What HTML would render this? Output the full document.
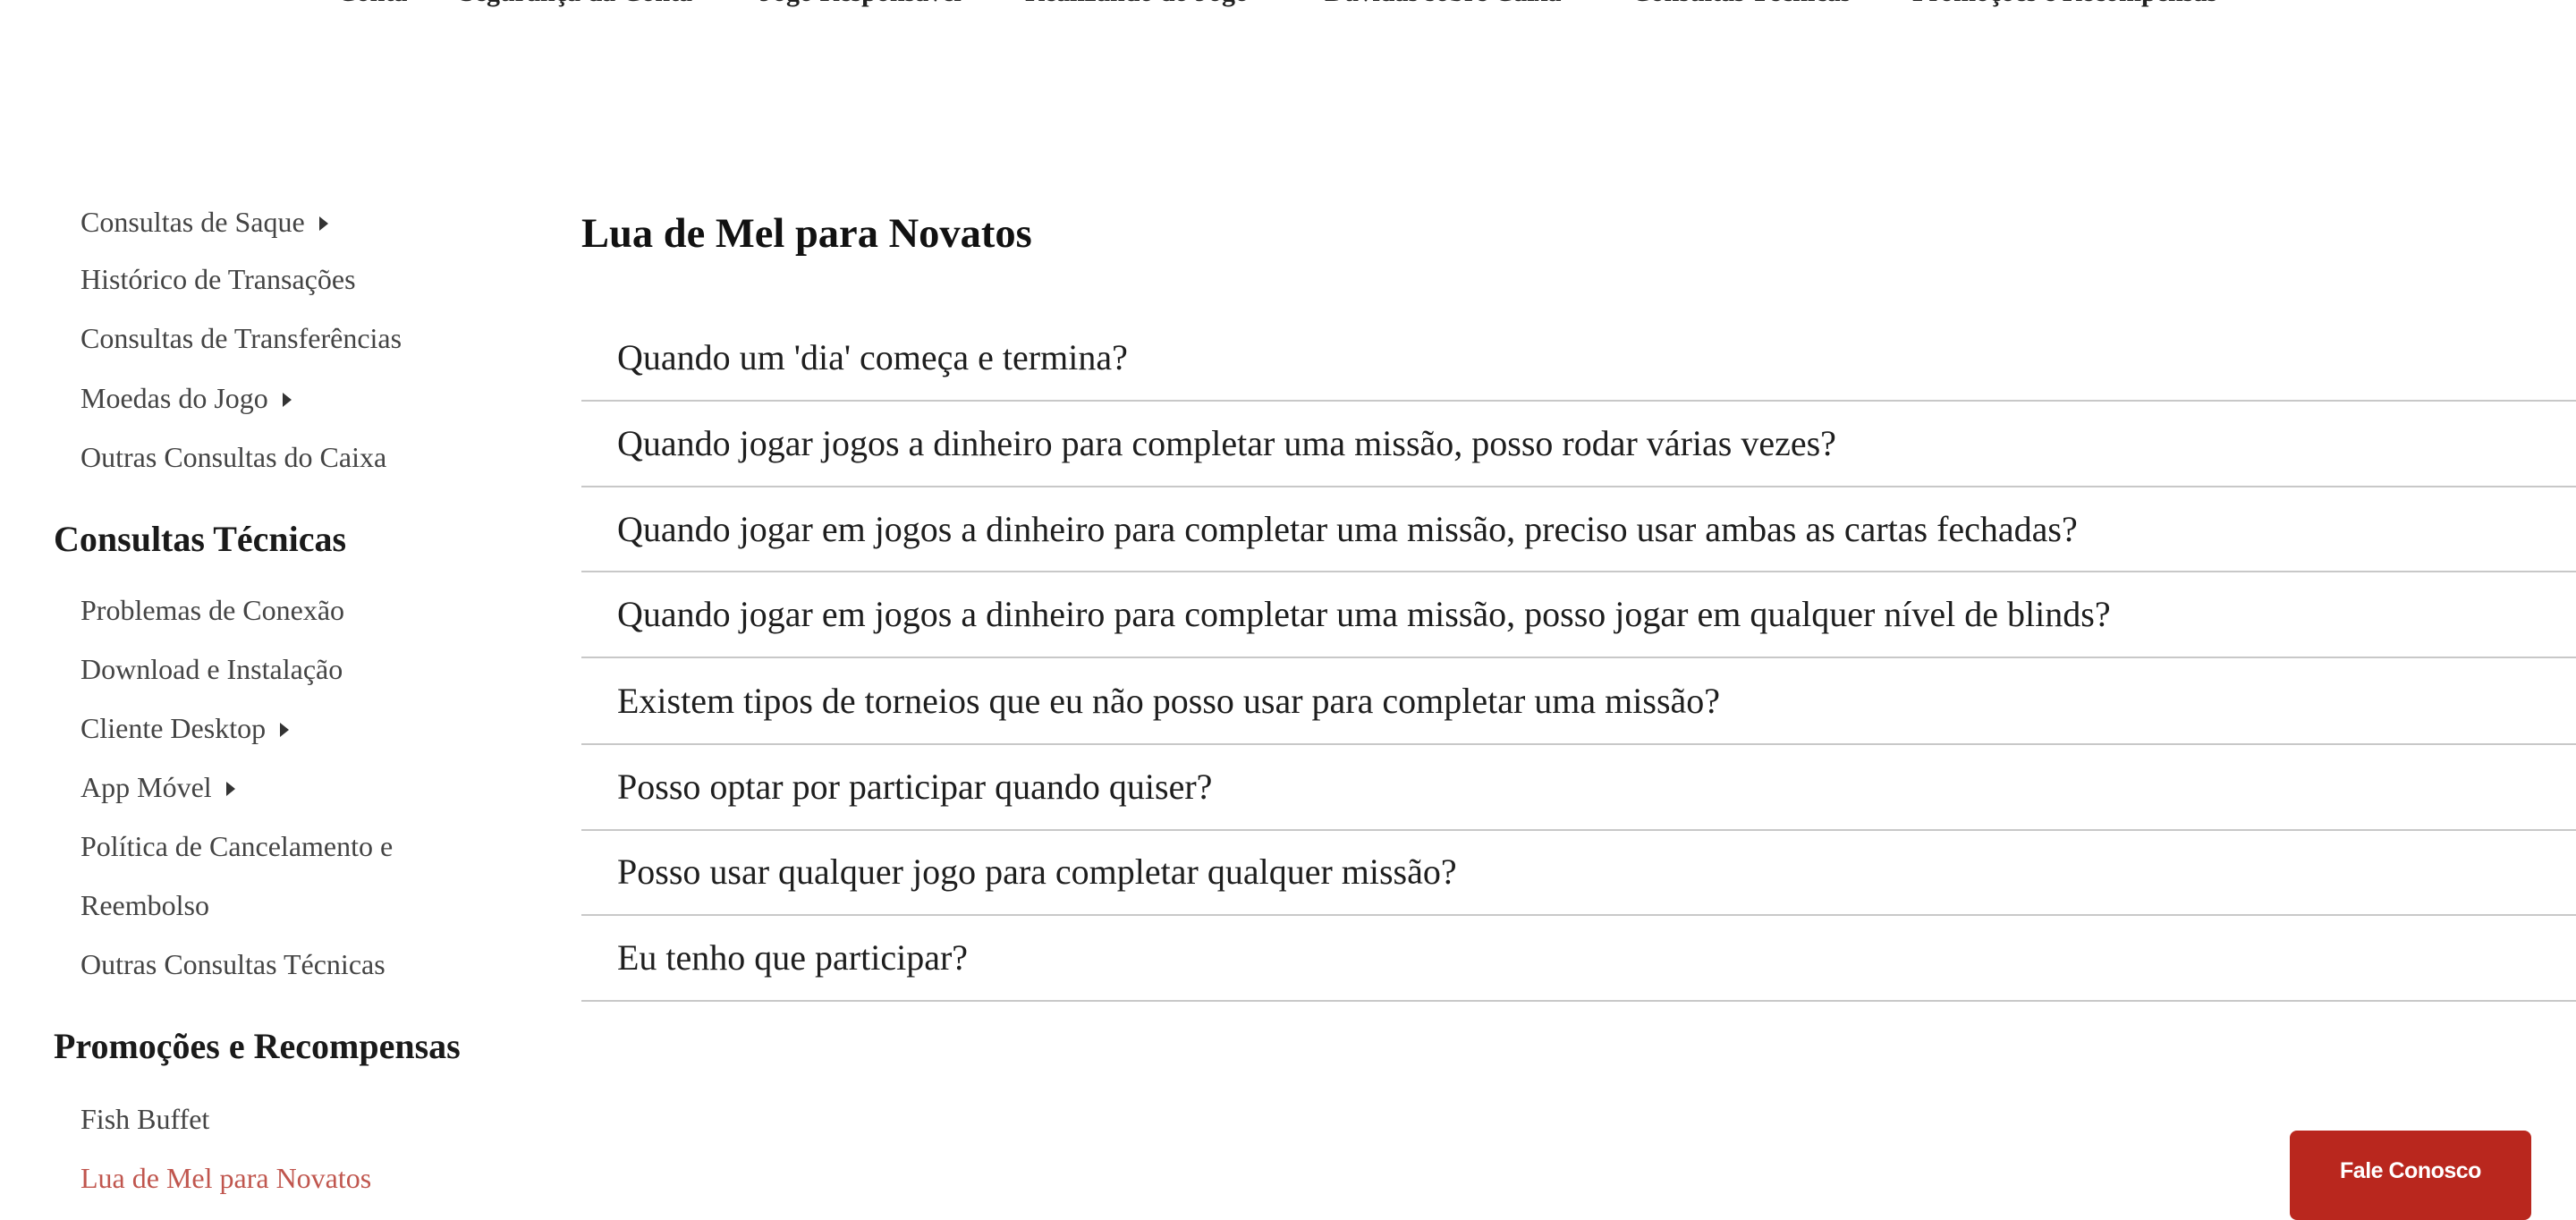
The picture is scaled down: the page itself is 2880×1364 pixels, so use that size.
<!DOCTYPE html>
<html><head><meta charset="utf-8"><style>
*{margin:0;padding:0;box-sizing:border-box}
html,body{width:2880px;height:1350px;overflow:hidden;background:#fff;font-family:"Liberation Serif",serif}
.a{position:absolute;white-space:nowrap}
.nav{font-weight:bold;font-size:30px;color:#222;line-height:30px;top:-23px}
.s{font-size:32px;color:#444;line-height:40px;left:90px}
.h{font-size:40px;font-weight:bold;color:#1a1a1a;line-height:50px;left:60px}
.q{font-size:40px;color:#1e1e1e;line-height:50px;left:690px}
.ln{position:absolute;left:650px;right:0;height:2px;background:#c8c8c8}
.tri{display:inline-block;width:0;height:0;border-left:10px solid #333;border-top:8px solid transparent;border-bottom:8px solid transparent;margin-left:16px;vertical-align:middle;position:relative;top:-2px}
</style></head><body>
<div class="a nav" style="left:377px">Conta</div>
<div class="a nav" style="left:514px">Segurança da Conta</div>
<div class="a nav" style="left:849px">Jogo Responsável</div>
<div class="a nav" style="left:1146px">Realizando do Jogo</div>
<div class="a nav" style="left:1481px">Dúvidas sobre Caixa</div>
<div class="a nav" style="left:1824px">Consultas Técnicas</div>
<div class="a nav" style="left:2138px">Promoções e Recompensas</div>

<div class="a s" style="top:228px">Consultas de Saque<span class="tri"></span></div>
<div class="a s" style="top:292px">Histórico de Transações</div>
<div class="a s" style="top:358px">Consultas de Transferências</div>
<div class="a s" style="top:425px">Moedas do Jogo<span class="tri"></span></div>
<div class="a s" style="top:491px">Outras Consultas do Caixa</div>
<div class="a h" style="top:578px">Consultas Técnicas</div>
<div class="a s" style="top:662px">Problemas de Conexão</div>
<div class="a s" style="top:728px">Download e Instalação</div>
<div class="a s" style="top:794px">Cliente Desktop<span class="tri"></span></div>
<div class="a s" style="top:860px">App Móvel<span class="tri"></span></div>
<div class="a s" style="top:926px">Política de Cancelamento e</div>
<div class="a s" style="top:992px">Reembolso</div>
<div class="a s" style="top:1058px">Outras Consultas Técnicas</div>
<div class="a h" style="top:1145px">Promoções e Recompensas</div>
<div class="a s" style="top:1231px">Fish Buffet</div>
<div class="a s" style="top:1297px;color:#c0564e">Lua de Mel para Novatos</div>

<div class="a" style="left:650px;top:234px;font-size:46.5px;font-weight:bold;color:#111;line-height:56px">Lua de Mel para Novatos</div>

<div class="a q" style="top:375px">Quando um 'dia' começa e termina?</div>
<div class="ln" style="top:447px"></div>
<div class="a q" style="top:471px">Quando jogar jogos a dinheiro para completar uma missão, posso rodar várias vezes?</div>
<div class="ln" style="top:543px"></div>
<div class="a q" style="top:567px">Quando jogar em jogos a dinheiro para completar uma missão, preciso usar ambas as cartas fechadas?</div>
<div class="ln" style="top:638px"></div>
<div class="a q" style="top:662px">Quando jogar em jogos a dinheiro para completar uma missão, posso jogar em qualquer nível de blinds?</div>
<div class="ln" style="top:734px"></div>
<div class="a q" style="top:759px">Existem tipos de torneios que eu não posso usar para completar uma missão?</div>
<div class="ln" style="top:831px"></div>
<div class="a q" style="top:855px">Posso optar por participar quando quiser?</div>
<div class="ln" style="top:927px"></div>
<div class="a q" style="top:950px">Posso usar qualquer jogo para completar qualquer missão?</div>
<div class="ln" style="top:1022px"></div>
<div class="a q" style="top:1046px">Eu tenho que participar?</div>
<div class="ln" style="top:1118px"></div>

<div class="a" style="left:2560px;top:1264px;width:270px;height:100px;background:#b9271e;border-radius:8px;color:#fff;font-family:'Liberation Sans',sans-serif;font-weight:bold;font-size:25px;text-align:center;line-height:90px;letter-spacing:-0.5px">Fale Conosco</div>
</body></html>
